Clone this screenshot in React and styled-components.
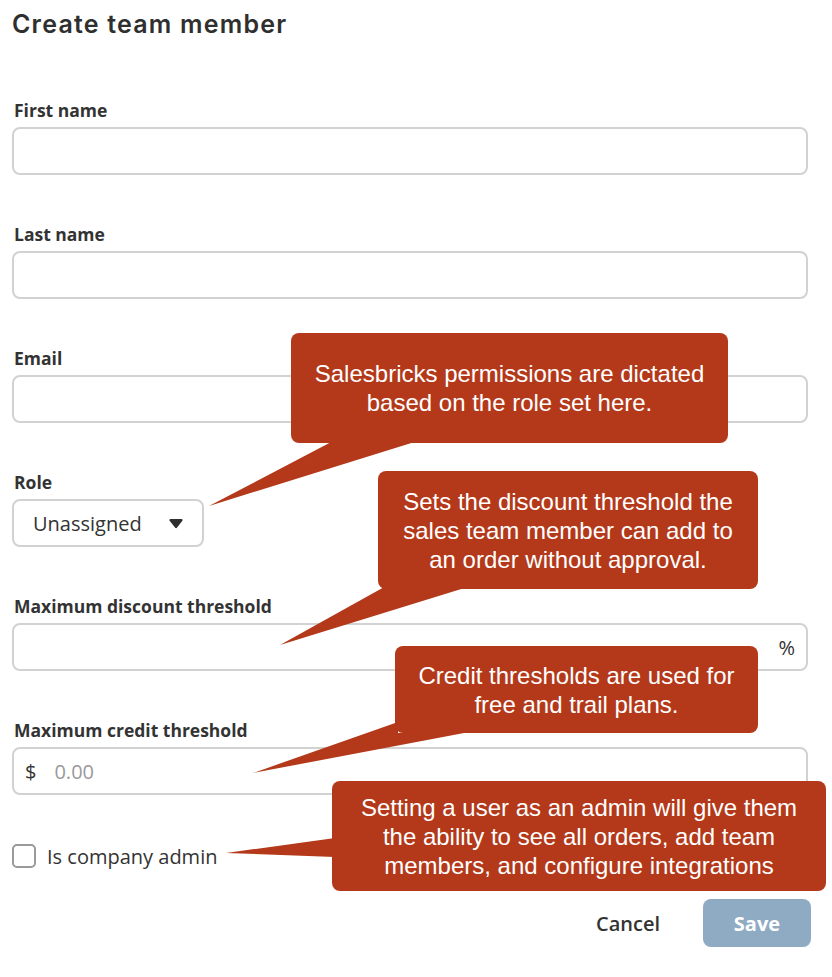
import React from "react";
import styled, { createGlobalStyle } from "styled-components";

const GlobalStyle = createGlobalStyle`
  * { box-sizing: border-box; }
  body {
    margin: 0;
    background: #fff;
    font-family: "Open Sans", "Noto Sans", sans-serif;
    color: #333;
  }
`;

const Page = styled.div`
  position: relative;
  width: 832px;
  height: 977px;
  padding: 8px 24px 0 12px;
  overflow: hidden;
`;

const Title = styled.h1`
  margin: 0 0 60px;
  font-family: "Inter", sans-serif;
  font-size: 25px;
  font-weight: 600;
  letter-spacing: 1.2px;
  line-height: 32px;
  color: #2f2f2f;
`;

const Field = styled.div`
  display: flex;
  flex-direction: column;
  gap: 7px;
  margin-bottom: 49px;
`;

const Label = styled.label`
  padding-left: 2px;
  font-size: 17.5px;
  font-weight: 700;
  line-height: 20px;
  color: #333;
`;

const InputBox = styled.div`
  display: flex;
  align-items: center;
  width: ${({ $width }) => $width || "100%"};
  height: 48px;
  padding: 0 ${({ $pad }) => $pad || "11px"};
  border: 2px solid #d2d2d2;
  border-radius: 8px;
  background: #fff;
  font-size: 20px;
  color: #333;
`;

const Affix = styled.span`
  color: #333;
  font-size: 20px;
  margin-left: ${({ $end }) => ($end ? "auto" : "0")};
`;

const Placeholder = styled.span`
  margin-left: 18px;
  color: #9a9a9a;
`;

const SelectValue = styled.span`
  flex: 1;
`;

const CheckRow = styled.label`
  display: flex;
  align-items: center;
  gap: 11px;
  height: 24px;
  font-size: 20px;
  color: #333;
`;

const CheckBox = styled.span`
  width: 24px;
  height: 24px;
  border: 2px solid #9a9a9a;
  border-radius: 5px;
`;

const Actions = styled.div`
  display: flex;
  justify-content: flex-end;
  align-items: center;
  gap: 43px;
  margin-top: 31px;
  margin-right: -3px;
`;

const TextButton = styled.button`
  border: 0;
  background: none;
  padding: 0;
  font-family: inherit;
  font-size: 20px;
  font-weight: 600;
  color: #333;
`;

const SaveButton = styled.button`
  width: 108px;
  height: 48px;
  border: 0;
  border-radius: 8px;
  background: #8faac3;
  color: #fff;
  font-family: inherit;
  font-size: 20px;
  font-weight: 700;
`;

const Bubble = styled.div`
  position: absolute;
  left: ${({ $x }) => $x}px;
  top: ${({ $y }) => $y}px;
  width: ${({ $w }) => $w}px;
  height: ${({ $h }) => $h}px;
  display: flex;
  align-items: center;
  justify-content: center;
  padding: 0 10px;
  border-radius: 8px;
  background: #b3391a;
  color: #fff;
  font-family: "Liberation Sans", Arial, sans-serif;
  font-size: 24px;
  line-height: 29px;
  text-align: center;
  z-index: 2;
`;

const TailLayer = styled.svg`
  position: absolute;
  left: 0;
  top: 0;
  width: 832px;
  height: 977px;
  pointer-events: none;
  z-index: 2;
`;

const callouts = [
  {
    x: 291, y: 333, w: 437, h: 110,
    tail: "335,440 421,440 209,506",
    lines: ["Salesbricks permissions are dictated", "based on the role set here."],
  },
  {
    x: 378, y: 471, w: 380, h: 118,
    tail: "386,586 471,586 280,645",
    lines: ["Sets the discount threshold the", "sales team member can add to", "an order without approval."],
  },
  {
    x: 395, y: 646, w: 363, h: 87,
    tail: "398,722 398,733 464,733 253,773",
    lines: ["Credit thresholds are used for", "free and trail plans."],
  },
  {
    x: 332, y: 781, w: 494, h: 110,
    tail: "335,838 335,857 226,853",
    lines: ["Setting a user as an admin will give them", "the ability to see all orders, add team", "members, and configure integrations"],
  },
];

function Caret() {
  return (
    <svg width="14" height="11" viewBox="0 0 14 11">
      <path d="M1.5 1h11c.9 0 1.4 1 .9 1.7L7.9 9.8c-.4.6-1.3.6-1.7 0L.6 2.7C.1 2 .6 1 1.5 1z" fill="#2f2f2f" />
    </svg>
  );
}

export default function App() {
  return (
    <>
      <GlobalStyle />
      <Page>
        <Title>Create team member</Title>

        <Field>
          <Label>First name</Label>
          <InputBox />
        </Field>
        <Field>
          <Label>Last name</Label>
          <InputBox />
        </Field>
        <Field>
          <Label>Email</Label>
          <InputBox />
        </Field>
        <Field>
          <Label>Role</Label>
          <InputBox $width="192px" $pad="19px">
            <SelectValue>Unassigned</SelectValue>
            <Caret />
          </InputBox>
        </Field>
        <Field>
          <Label>Maximum discount threshold</Label>
          <InputBox>
            <Affix $end>%</Affix>
          </InputBox>
        </Field>
        <Field>
          <Label>Maximum credit threshold</Label>
          <InputBox>
            <Affix>$</Affix>
            <Placeholder>0.00</Placeholder>
          </InputBox>
        </Field>

        <CheckRow>
          <CheckBox />
          Is company admin
        </CheckRow>

        <Actions>
          <TextButton>Cancel</TextButton>
          <SaveButton>Save</SaveButton>
        </Actions>

        <TailLayer viewBox="0 0 832 977">
          {callouts.map((c, i) => (
            <polygon key={i} points={c.tail} fill="#b3391a" />
          ))}
        </TailLayer>
        {callouts.map((c, i) => (
          <Bubble key={i} $x={c.x} $y={c.y} $w={c.w} $h={c.h}>
            <div>
              {c.lines.map((l, j) => (
                <div key={j}>{l}</div>
              ))}
            </div>
          </Bubble>
        ))}
      </Page>
    </>
  );
}
